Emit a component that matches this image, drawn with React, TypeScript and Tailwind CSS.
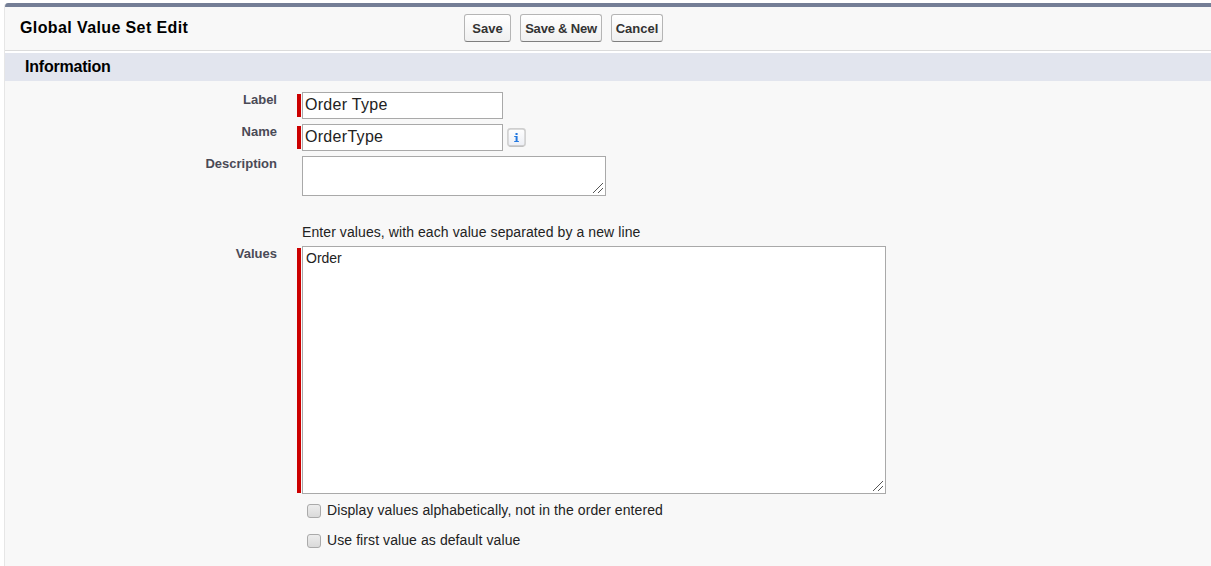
import type { ReactNode } from "react";

function ToolbarButton({ className, children }: { className: string; children: ReactNode }) {
  return (
    <button
      type="button"
      className={`h-7 shrink-0 whitespace-nowrap rounded-[3px] border border-[#b5b5b5] border-b-[#7f7f7f] bg-linear-to-b from-white to-[#f0f0f0] pt-px text-center text-[13px] font-bold leading-[25px] text-[#333] ${className}`}
    >
      {children}
    </button>
  );
}

function FieldLabel({ children }: { children: ReactNode }) {
  return (
    <div className="w-[272px] shrink-0 text-right text-[13px] font-bold leading-[15px] text-[#4a4a56]">
      {children}
    </div>
  );
}

function RequiredBar({ className }: { className: string }) {
  return <div className={`mr-px mt-0.5 w-1 shrink-0 bg-[#c00] ${className}`} />;
}

const GRIP_STEPS = [0, 1, 2, 3, 4, 5, 6, 7, 8, 9];

function ResizeGrip() {
  return (
    <svg
      className="pointer-events-none absolute bottom-[3px] right-[3px] h-[10px] w-[10px]"
      viewBox="0 0 10 10"
      shapeRendering="crispEdges"
      fill="#555"
    >
      {GRIP_STEPS.map((i) => (
        <rect key={i} x={i} y={9 - i} width="1" height="1" />
      ))}
      {GRIP_STEPS.slice(5).map((i) => (
        <rect key={i} x={i} y={14 - i} width="1" height="1" />
      ))}
    </svg>
  );
}

function InfoIcon() {
  return (
    <svg className="ml-1 mt-1 h-[19px] w-[19px]" viewBox="0 0 19 19">
      <defs>
        <linearGradient id="info-face" x1="0" y1="0" x2="0" y2="1">
          <stop offset="0" stopColor="#fff" />
          <stop offset="1" stopColor="#eceef4" />
        </linearGradient>
      </defs>
      <rect x="0.9" y="0.9" width="17.2" height="17.2" rx="2.5" fill="url(#info-face)" stroke="#cfcfcf" strokeWidth="1.6" />
      <path d="M2.5 18.2H16.5" stroke="#bcbcbc" />
      <path d="M8.5 5H10.6V7H8.5ZM7.2 8H10.6V13H11.9V14H7.2V13H8.6V9H7.2Z" fill="#2479e0" />
    </svg>
  );
}

function CheckRow({ children }: { children: ReactNode }) {
  return (
    <label className="flex h-[30px] items-start pl-0.5">
      <input
        type="checkbox"
        className="mt-0.5 h-3.5 w-3.5 shrink-0 appearance-none rounded-[3px] border border-[#aaa] bg-linear-to-b from-[#ededed] to-[#dadada]"
      />
      <span className="ml-1.5 whitespace-nowrap text-[14px] leading-4 tracking-[0.085px] text-[#222]">{children}</span>
    </label>
  );
}

export default function App() {
  return (
    <div className="h-[566px] w-full overflow-hidden bg-white pl-1 pt-[3px] font-['Liberation_Sans',Arial,sans-serif]">
      <div className="h-[563px] overflow-hidden rounded-tl-[4px] border-l border-[#e6e6e6] bg-[#f8f8f8]">
        <div className="h-1 bg-[#747e96]" />
        <header className="flex h-11 items-start border-b border-[#dbdbdb] pt-[7px]">
          <h1 className="w-[459px] shrink-0 whitespace-nowrap pl-[15px] pt-[5px] text-[16px] font-bold leading-[18px] tracking-[0.39px] text-black">
            Global Value Set Edit
          </h1>
          <div className="flex gap-[9px]">
            <ToolbarButton className="w-[47px]">Save</ToolbarButton>
            <ToolbarButton className="w-[82px] tracking-[-0.2px]">Save &amp; New</ToolbarButton>
            <ToolbarButton className="w-[52px]">Cancel</ToolbarButton>
          </div>
        </header>
        <h2 className="h-[30px] border-t-2 border-white bg-[#e2e5ee] pl-5 pt-[5px] text-[16px] font-bold leading-[18px] tracking-[-0.22px] text-black">
          Information
        </h2>
        <form className="pt-[11px]">
          <div className="flex h-8">
            <FieldLabel>Label</FieldLabel>
            <div className="ml-5 flex items-start">
              <RequiredBar className="h-[23px]" />
              <input
                defaultValue="Order Type"
                className="h-[27px] w-[201px] border border-[#a9a9a9] bg-white pb-0.5 pl-0.5 text-[16px] tracking-[0.3px] text-[#222] outline-none"
              />
            </div>
          </div>
          <div className="flex h-8">
            <FieldLabel>Name</FieldLabel>
            <div className="ml-5 flex items-start">
              <RequiredBar className="h-[23px]" />
              <input
                defaultValue="OrderType"
                className="h-[27px] w-[201px] border border-[#a9a9a9] bg-white pb-0.5 pl-0.5 text-[16px] tracking-[0.3px] text-[#222] outline-none"
              />
              <InfoIcon />
            </div>
          </div>
          <div className="flex h-[68px]">
            <FieldLabel>Description</FieldLabel>
            <div className="relative ml-[25px] h-10 w-[304px]">
              <textarea className="block h-full w-full resize-none border border-[#a9a9a9] bg-white outline-none" />
              <ResizeGrip />
            </div>
          </div>
          <div className="h-[22px] pl-[297px] text-[14px] leading-4 tracking-[0.085px] text-[#222]">
            Enter values, with each value separated by a new line
          </div>
          <div className="flex">
            <FieldLabel>Values</FieldLabel>
            <div className="ml-5">
              <div className="flex">
                <RequiredBar className="h-[245px]" />
                <div className="relative h-[248px] w-[584px]">
                  <textarea
                    defaultValue="Order"
                    className="block h-full w-full resize-none border border-[#a9a9a9] bg-white px-[3px] pt-[3px] text-[14px] leading-4 text-[#222] outline-none"
                  />
                  <ResizeGrip />
                </div>
              </div>
              <div className="pl-2 pt-2">
                <CheckRow>Display values alphabetically, not in the order entered</CheckRow>
                <CheckRow>Use first value as default value</CheckRow>
              </div>
            </div>
          </div>
        </form>
      </div>
    </div>
  );
}
